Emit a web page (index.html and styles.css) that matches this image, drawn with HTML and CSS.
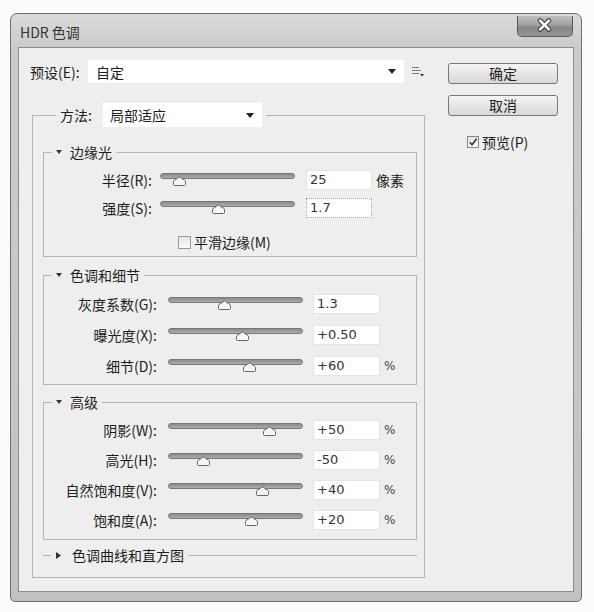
FILE: index.html
```html
<!DOCTYPE html>
<html lang="zh-CN">
<head>
<meta charset="utf-8">
<title>HDR 色调</title>
<link rel="stylesheet" href="styles.css">
</head>
<body>
<div class="window">
  <div class="titlebar">
    <span class="title">HDR 色调</span>
    <button class="close" aria-label="关闭">
      <svg width="56" height="21" viewBox="0 0 56 21"><path d="M23.5 5.5 L32.5 14.5 M32.5 5.5 L23.5 14.5" stroke="#4a4a4a" stroke-width="5" stroke-linecap="round"/><path d="M23.5 5.5 L32.5 14.5 M32.5 5.5 L23.5 14.5" stroke="#ffffff" stroke-width="2.6" stroke-linecap="round"/></svg>
    </button>
  </div>
  <div class="content">
    <div class="main">
      <div class="preset-row">
        <span class="preset-label">预设(E):</span>
        <div class="select preset-select"><span>自定</span><svg class="arrow" width="8" height="5" viewBox="0 0 8 5"><polygon points="0,0 8,0 4,5" fill="#222"/></svg></div>
        <svg class="flyout" width="12" height="11" viewBox="0 0 12 11"><path d="M0 1.5 H7 M0 4.5 H9 M0 7.5 H7" stroke="#555" stroke-width="1.2" stroke-dasharray="1.5 0.6"/><polygon points="8,8 12,8 10,10.5" fill="#333"/></svg>
      </div>
      <fieldset class="method">
        <legend class="method-legend"><div class="legend-inner"><span>方法:</span><div class="select method-select"><span>局部适应</span><svg class="arrow" width="8" height="5" viewBox="0 0 8 5"><polygon points="0,0 8,0 4,5" fill="#222"/></svg></div></div></legend>

        <fieldset class="group edge">
          <legend class="group-legend"><div class="legend-inner"><svg class="tri" width="6" height="4" viewBox="0 0 6 4"><polygon points="0,0 6,0 3,4" fill="#333"/></svg><span>边缘光</span></div></legend>
          <div class="row">
            <span class="label">半径(R):</span>
            <div class="slider"><div class="track"></div><svg class="thumb" style="left:14.8%" width="13" height="10" viewBox="0 0 13 10"><path d="M6.5 0.8 L12.3 4.8 Q12.5 5 12.5 5.5 L12.5 8.5 Q12.5 9.5 11.5 9.5 L1.5 9.5 Q0.5 9.5 0.5 8.5 L0.5 5.5 Q0.5 5 0.7 4.8 Z" fill="#f6f6f6" stroke="#666"/></svg></div>
            <div class="field">25</div>
            <span class="unit cjk">像素</span>
          </div>
          <div class="row">
            <span class="label">强度(S):</span>
            <div class="slider"><div class="track"></div><svg class="thumb" style="left:43%" width="13" height="10" viewBox="0 0 13 10"><path d="M6.5 0.8 L12.3 4.8 Q12.5 5 12.5 5.5 L12.5 8.5 Q12.5 9.5 11.5 9.5 L1.5 9.5 Q0.5 9.5 0.5 8.5 L0.5 5.5 Q0.5 5 0.7 4.8 Z" fill="#f6f6f6" stroke="#666"/></svg></div>
            <div class="field boxed">1.7</div>
          </div>
          <label class="smooth"><span class="cbox"></span>平滑边缘(M)</label>
        </fieldset>

        <fieldset class="group tone">
          <legend class="group-legend"><div class="legend-inner"><svg class="tri" width="6" height="4" viewBox="0 0 6 4"><polygon points="0,0 6,0 3,4" fill="#333"/></svg><span>色调和细节</span></div></legend>
          <div class="row">
            <span class="label">灰度系数(G):</span>
            <div class="slider"><div class="track"></div><svg class="thumb" style="left:41.5%" width="13" height="10" viewBox="0 0 13 10"><path d="M6.5 0.8 L12.3 4.8 Q12.5 5 12.5 5.5 L12.5 8.5 Q12.5 9.5 11.5 9.5 L1.5 9.5 Q0.5 9.5 0.5 8.5 L0.5 5.5 Q0.5 5 0.7 4.8 Z" fill="#f6f6f6" stroke="#666"/></svg></div>
            <div class="field">1.3</div>
          </div>
          <div class="row">
            <span class="label">曝光度(X):</span>
            <div class="slider"><div class="track"></div><svg class="thumb" style="left:55%" width="13" height="10" viewBox="0 0 13 10"><path d="M6.5 0.8 L12.3 4.8 Q12.5 5 12.5 5.5 L12.5 8.5 Q12.5 9.5 11.5 9.5 L1.5 9.5 Q0.5 9.5 0.5 8.5 L0.5 5.5 Q0.5 5 0.7 4.8 Z" fill="#f6f6f6" stroke="#666"/></svg></div>
            <div class="field">+0.50</div>
          </div>
          <div class="row">
            <span class="label">细节(D):</span>
            <div class="slider"><div class="track"></div><svg class="thumb" style="left:60.5%" width="13" height="10" viewBox="0 0 13 10"><path d="M6.5 0.8 L12.3 4.8 Q12.5 5 12.5 5.5 L12.5 8.5 Q12.5 9.5 11.5 9.5 L1.5 9.5 Q0.5 9.5 0.5 8.5 L0.5 5.5 Q0.5 5 0.7 4.8 Z" fill="#f6f6f6" stroke="#666"/></svg></div>
            <div class="field">+60</div>
            <span class="unit">%</span>
          </div>
        </fieldset>

        <fieldset class="group adv">
          <legend class="group-legend"><div class="legend-inner"><svg class="tri" width="6" height="4" viewBox="0 0 6 4"><polygon points="0,0 6,0 3,4" fill="#333"/></svg><span>高级</span></div></legend>
          <div class="row">
            <span class="label">阴影(W):</span>
            <div class="slider"><div class="track"></div><svg class="thumb" style="left:75.5%" width="13" height="10" viewBox="0 0 13 10"><path d="M6.5 0.8 L12.3 4.8 Q12.5 5 12.5 5.5 L12.5 8.5 Q12.5 9.5 11.5 9.5 L1.5 9.5 Q0.5 9.5 0.5 8.5 L0.5 5.5 Q0.5 5 0.7 4.8 Z" fill="#f6f6f6" stroke="#666"/></svg></div>
            <div class="field">+50</div>
            <span class="unit">%</span>
          </div>
          <div class="row">
            <span class="label">高光(H):</span>
            <div class="slider"><div class="track"></div><svg class="thumb" style="left:26%" width="13" height="10" viewBox="0 0 13 10"><path d="M6.5 0.8 L12.3 4.8 Q12.5 5 12.5 5.5 L12.5 8.5 Q12.5 9.5 11.5 9.5 L1.5 9.5 Q0.5 9.5 0.5 8.5 L0.5 5.5 Q0.5 5 0.7 4.8 Z" fill="#f6f6f6" stroke="#666"/></svg></div>
            <div class="field">-50</div>
            <span class="unit">%</span>
          </div>
          <div class="row">
            <span class="label">自然饱和度(V):</span>
            <div class="slider"><div class="track"></div><svg class="thumb" style="left:70%" width="13" height="10" viewBox="0 0 13 10"><path d="M6.5 0.8 L12.3 4.8 Q12.5 5 12.5 5.5 L12.5 8.5 Q12.5 9.5 11.5 9.5 L1.5 9.5 Q0.5 9.5 0.5 8.5 L0.5 5.5 Q0.5 5 0.7 4.8 Z" fill="#f6f6f6" stroke="#666"/></svg></div>
            <div class="field">+40</div>
            <span class="unit">%</span>
          </div>
          <div class="row">
            <span class="label">饱和度(A):</span>
            <div class="slider"><div class="track"></div><svg class="thumb" style="left:61.5%" width="13" height="10" viewBox="0 0 13 10"><path d="M6.5 0.8 L12.3 4.8 Q12.5 5 12.5 5.5 L12.5 8.5 Q12.5 9.5 11.5 9.5 L1.5 9.5 Q0.5 9.5 0.5 8.5 L0.5 5.5 Q0.5 5 0.7 4.8 Z" fill="#f6f6f6" stroke="#666"/></svg></div>
            <div class="field">+20</div>
            <span class="unit">%</span>
          </div>
        </fieldset>

        <fieldset class="group curves">
          <legend class="group-legend"><div class="legend-inner"><svg class="tri-right" width="5" height="7" viewBox="0 0 5 7"><polygon points="0,0 5,3.5 0,7" fill="#333"/></svg><span>色调曲线和直方图</span></div></legend>
        </fieldset>
      </fieldset>
    </div>
    <div class="side">
      <button class="btn">确定</button>
      <button class="btn">取消</button>
      <label class="preview"><span class="cbox checked"><svg width="10" height="10" viewBox="0 0 10 10"><path d="M1.8 5.2 L4 7.8 L8.6 1.8" fill="none" stroke="#333" stroke-width="1.5"/></svg></span>预览(P)</label>
    </div>
  </div>
</div>
</body>
</html>
```

FILE: styles.css
```css
* { box-sizing: border-box; }

body {
  margin: 0;
  background: #fbfbfb;
  font-family: "Noto Sans CJK SC", "Noto Sans", sans-serif;
  font-size: 14px;
  color: #1c1c1c;
}

.window {
  margin: 13px 0 0 10px;
  width: 572px;
  height: 589px;
  border: 1px solid #6e6e6e;
  border-radius: 7px 7px 5px 5px;
  background: linear-gradient(#dadada, #cbcbcb 34px, #c2c2c2);
  padding: 0 7px 9px;
  display: flex;
  flex-direction: column;
}

.titlebar {
  height: 33px;
  flex: none;
  display: flex;
  justify-content: space-between;
  align-items: flex-start;
}

.title {
  margin: 8px 0 0 2px;
  line-height: 20px;
  font-size: 14px;
  color: #333;
}

.close {
  margin: 2px 1px 0 0;
  width: 56px;
  height: 21px;
  padding: 0;
  border: 1px solid #5a5a5a;
  border-top: none;
  border-radius: 0 0 5px 5px;
  background: linear-gradient(#c0c0c0, #a0a0a0 45%, #878787 55%, #969696);
  display: flex;
}
.close svg { display: block; margin: -1px 0 0 -1px; }

.content {
  flex: 1;
  border: 1px solid #8d8d8d;
  background: #eeeeee;
  padding: 12px 0 0 11px;
  display: flex;
  gap: 23px;
}

.main { width: 395px; flex: none; }

.preset-row {
  height: 23px;
  display: flex;
  align-items: center;
}
.preset-label { width: 58px; line-height: 20px; }

.select {
  height: 100%;
  background: #fff;
  display: flex;
  align-items: center;
  justify-content: space-between;
  padding: 0 8px 0 8px;
  line-height: 20px;
}
.preset-select { width: 316px; }
.arrow { display: block; }
.flyout { margin-left: 8px; display: block; }

.method {
  margin: 20px 0 0 2px;
  width: 393px;
  border: 1px solid #b4b4b4;
  padding: 15px 7px 12px 10px;
  min-inline-size: 0;
}
.method-legend {
  margin-left: 13px;
  padding: 0 4px;
}
.legend-inner {
  display: flex;
  align-items: center;
}
.method-legend .legend-inner { gap: 11px; height: 24px; }
.method-select { width: 159px; height: 24px; padding: 0 8px 0 7px; }

.group {
  margin: 0;
  border: 1px solid #b4b4b4;
  padding: 0;
  min-inline-size: 0;
}
.group-legend {
  margin-left: 8px;
  padding: 0 4px;
}
.group-legend .legend-inner { height: 20px; line-height: 20px; }
.tri { display: block; margin-right: 8px; }
.tri-right { display: block; margin-right: 11px; margin-left: 1px; }

.edge { padding: 4px 0 2px; }
.tone { margin-top: 8px; padding: 3px 0 3px; }
.adv { margin-top: 7px; padding: 3px 0 4px; }
.curves {
  margin-top: 5px;
  border: none;
  border-top: 1px solid #b4b4b4;
}

.row {
  display: flex;
  align-items: center;
  height: 30px;
}
.edge .row { height: 28px; }
.tone .row { height: 31px; }

.label {
  text-align: right;
  line-height: 20px;
  width: 113px;
  white-space: nowrap;
}
.edge .label { width: 108px; }

.slider {
  position: relative;
  width: 135px;
  height: 16px;
  margin-left: 11px;
}
.edge .slider { margin-left: 8px; }

.track {
  margin-top: 1px;
  height: 6px;
  border-radius: 3px;
  border: 1px solid #777;
  background: linear-gradient(#8a8a8a, #adadad);
}
.thumb {
  position: absolute;
  top: 4px;
  margin-left: -6.5px;
  display: block;
}

.field {
  margin-left: 10px;
  width: 67px;
  height: 20px;
  background: #fff;
  border: 1px solid #e4e4e4;
  padding-left: 3px;
  font-family: "DejaVu Sans", sans-serif;
  font-size: 13px;
  line-height: 18px;
  color: #333;
}
.edge .field { margin-left: 11px; width: 66px; }
.field.boxed { border: 1px dotted #a5a5a5; }

.unit {
  margin-left: 4px;
  font-family: "DejaVu Sans", sans-serif;
  font-size: 12px;
  color: #444;
}
.unit.cjk { font-family: "Noto Sans CJK SC", sans-serif; font-size: 14px; color: #1c1c1c; }

.smooth {
  margin: 8px 0 0 134px;
  height: 24px;
  display: flex;
  align-items: center;
  gap: 3px;
}

.cbox {
  width: 13px;
  height: 13px;
  border: 1px solid #9a9a9a;
  background: linear-gradient(#e4e4e4, #fafafa);
  display: flex;
  align-items: center;
  justify-content: center;
}
.cbox.checked { width: 12px; height: 12px; border-color: #888; }

.side {
  width: 110px;
  margin-top: 3px;
  display: flex;
  flex-direction: column;
  gap: 11px;
}
.btn {
  height: 21px;
  padding: 0;
  border: 1px solid #777;
  border-radius: 3px;
  background: linear-gradient(#f4f4f4, #e6e6e6 50%, #d8d8d8);
  font-family: inherit;
  font-size: 14px;
  line-height: 19px;
  color: #222;
}
.preview {
  margin: 8px 0 0 19px;
  height: 14px;
  display: flex;
  align-items: center;
  gap: 3px;
  line-height: 14px;
}
```
